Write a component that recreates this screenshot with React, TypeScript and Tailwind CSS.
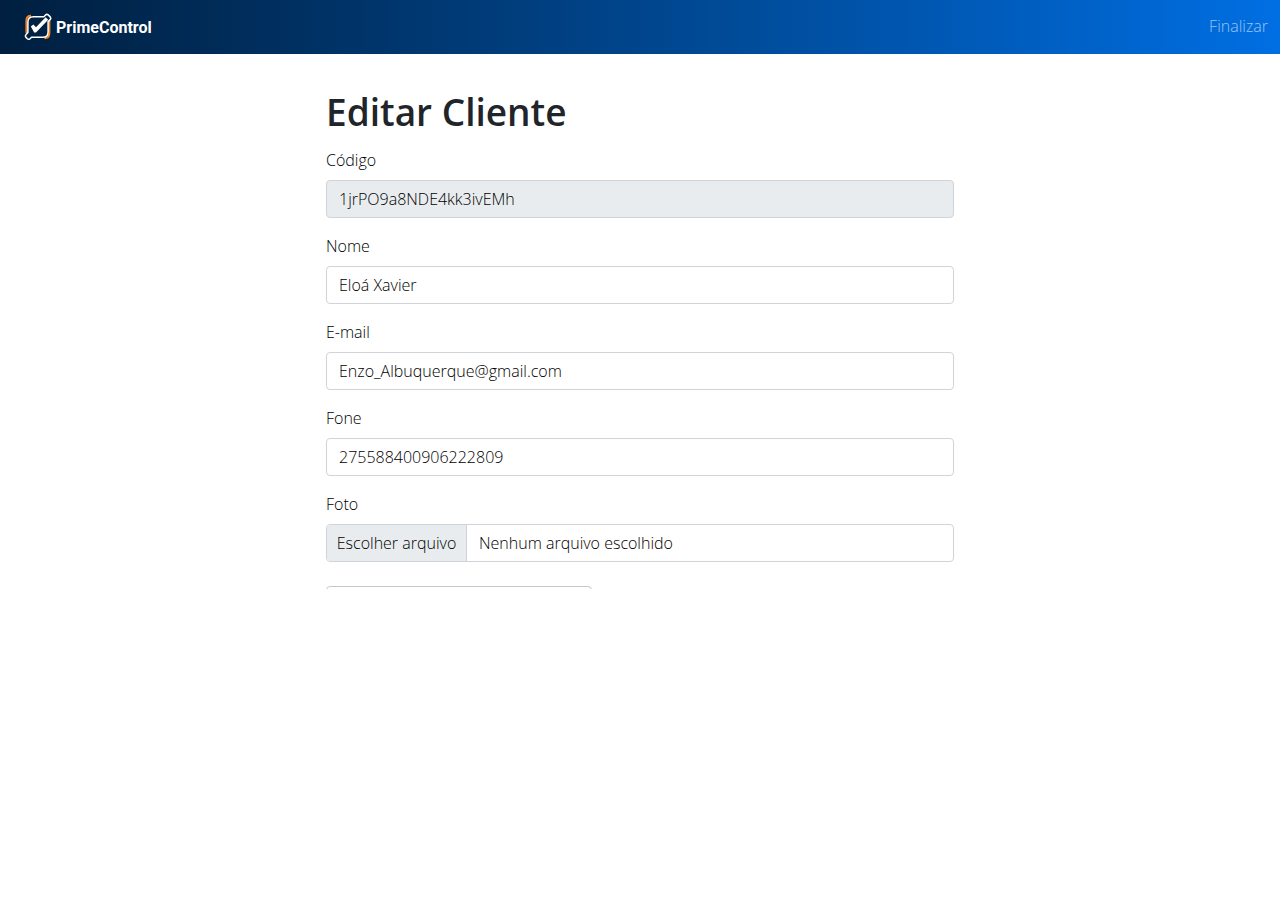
import { useState } from "react";

type FieldProps = {
  id: string;
  label: string;
  type?: string;
  value: string;
  disabled?: boolean;
};

function Field({ id, label, type = "text", value, disabled }: FieldProps) {
  const [text, setText] = useState(value);
  return (
    <div className="mb-4">
      <label htmlFor={id} className="mb-2 block">
        {label}
      </label>
      <input
        id={id}
        type={type}
        value={text}
        disabled={disabled}
        onChange={(e) => setText(e.target.value)}
        className="block w-full rounded border border-[#ced4da] bg-white px-3 py-1.5 leading-6 text-black outline-none focus:border-[#86b7fe] disabled:bg-[#e9ecef]"
      />
    </div>
  );
}

function FileField() {
  const [fileName, setFileName] = useState("Nenhum arquivo escolhido");
  return (
    <div className="mb-6">
      <label htmlFor="foto" className="mb-2 block">
        Foto
      </label>
      <input
        id="foto"
        type="file"
        className="sr-only"
        onChange={(e) => setFileName(e.target.files?.[0]?.name ?? "Nenhum arquivo escolhido")}
      />
      <label
        htmlFor="foto"
        className="flex w-full cursor-pointer overflow-hidden rounded border border-[#ced4da] bg-white"
      >
        <span className="w-[140px] border-r border-[#ced4da] bg-[#e9ecef] py-1.5 text-center">Escolher arquivo</span>
        <span className="px-3 py-1.5">{fileName}</span>
      </label>
    </div>
  );
}

function Logo() {
  return (
    <a href="#" aria-label="PrimeControl" className="flex items-center gap-1 text-white">
      <svg width="28" height="28" viewBox="0 0 28 28" fill="none" aria-hidden="true">
        <path d="M2.4 20V7.5Q2.4 2.8 7 2.8" stroke="#f58220" strokeWidth="2" />
        <path d="M25.4 8V20Q25.4 25.2 20.5 25.2" stroke="#f58220" strokeWidth="2" />
        <path
          d="M18.8 3.8H9.4Q3.9 3.8 3.9 9.2V19.6L2 21.6Q.9 23 2 24.4L3.4 25.8Q4.7 26.9 6 25.7L7.5 24.2H18.8Q24.1 24.2 24.1 18.9V8.6L26.2 6.6Q27.3 5.2 26.2 3.9L24.2 1.9Q22.9.8 21.6 1.9L19.8 3.8Z"
          stroke="#fff"
          strokeWidth="1.5"
          strokeLinejoin="round"
        />
        <path d="M6.8 13.6 9.4 11.4 12 14.2 21.6 4.2 24.2 6.8 12 19.6 10.2 19.6Z" fill="#fff" />
      </svg>
      <span className="pt-0.5 font-[Roboto,sans-serif] text-base leading-7 font-bold">PrimeControl</span>
    </a>
  );
}

export default function App() {
  return (
    <div className="font-['Open_Sans',sans-serif] text-base font-light text-black">
      <header className="flex h-[54px] items-center justify-between bg-linear-to-r from-[#001f3f] to-[#006fe3] pr-3 pl-6">
        <Logo />
        <a href="#" className="pb-0.5 text-white/60 hover:text-white/75">
          Finalizar
        </a>
      </header>
      <main className="mx-auto w-full max-w-[652px] px-3 pt-[34px]">
        <h1 className="mb-3 text-[37px] leading-12 font-semibold text-[#212529]">Editar Cliente</h1>
        <form>
          <Field id="codigo" label="Código" value="1jrPO9a8NDE4kk3ivEMh" disabled />
          <Field id="nome" label="Nome" value="Eloá Xavier" />
          <Field id="email" label="E-mail" type="email" value="Enzo_Albuquerque@gmail.com" />
          <Field id="fone" label="Fone" type="tel" value="275588400906222809" />
          <FileField />
          <div className="h-[3px] w-[266px] overflow-hidden">
            <div className="h-3 rounded border border-[#c4c8cb]" />
          </div>
        </form>
      </main>
    </div>
  );
}
